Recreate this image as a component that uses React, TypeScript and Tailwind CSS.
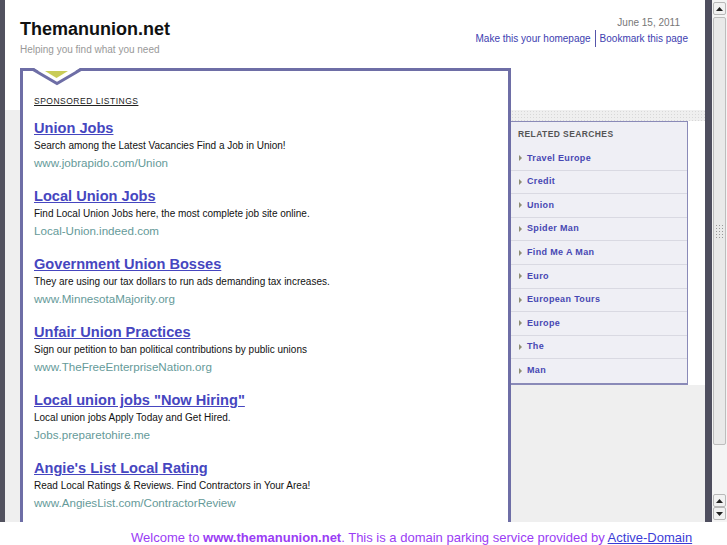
const listings = [
  { title: "Union Jobs", desc: "Search among the Latest Vacancies Find a Job in Union!", url: "www.jobrapido.com/Union" },
  { title: "Local Union Jobs", desc: "Find Local Union Jobs here, the most complete job site online.", url: "Local-Union.indeed.com" },
  { title: "Government Union Bosses", desc: "They are using our tax dollars to run ads demanding tax increases.", url: "www.MinnesotaMajority.org" },
  { title: "Unfair Union Practices", desc: "Sign our petition to ban political contributions by public unions", url: "www.TheFreeEnterpriseNation.org" },
  { title: 'Local union jobs "Now Hiring"', desc: "Local union jobs Apply Today and Get Hired.", url: "Jobs.preparetohire.me" },
  { title: "Angie's List Local Rating", desc: "Read Local Ratings & Reviews. Find Contractors in Your Area!", url: "www.AngiesList.com/ContractorReview" },
];

const related = ["Travel Europe", "Credit", "Union", "Spider Man", "Find Me A Man", "Euro", "European Tours", "Europe", "The", "Man"];

function Arrow({ up }: { up: boolean }) {
  return (
    <div className="h-[13px] shrink-0 mx-[1px] border border-[#b8b8b8] rounded-[2px] bg-[#f2f2f2] flex items-center justify-center">
      <svg width="7" height="4" viewBox="0 0 7 4">
        <polygon points={up ? "0,4 7,4 3.5,0" : "0,0 7,0 3.5,4"} fill="#222" />
      </svg>
    </div>
  );
}

function Scrollbar() {
  return (
    <div className="w-[15px] h-full bg-[#f4f4f4] flex flex-col pt-[2px] pb-[2px]">
      <Arrow up />
      <div className="mt-[2px] h-[428px] shrink-0 mx-[1px] border border-[#bdbdbd] rounded-[2px] bg-[#e9e9e9] flex items-center justify-center">
        <div className="grid grid-cols-3 gap-[2px]">
          {Array.from({ length: 15 }).map((_, i) => (
            <div key={i} className="w-[1px] h-[1px] bg-[#999]" />
          ))}
        </div>
      </div>
      <div className="flex-1" />
      <Arrow up />
      <Arrow up={false} />
    </div>
  );
}

export default function App() {
  return (
    <div className="w-[727px] h-[545px] overflow-hidden bg-white font-['Liberation_Sans',Arial,sans-serif]">
      <div className="flex h-[522px]">
        <div className="w-[5px] bg-[#52525f]" />
        <div className="w-[700px] flex flex-col overflow-hidden bg-[linear-gradient(to_bottom,white_110px,#efefef_110px)]">
          {/* header */}
          <div className="h-[68px] shrink-0 flex justify-between pl-[15px] pr-[17px]">
            <div>
              <div className="mt-[17px] text-[18px] leading-[24px] font-bold text-[#111]">Themanunion.net</div>
              <div className="mt-[2px] text-[10px] leading-[14px] text-[#999]">Helping you find what you need</div>
            </div>
            <div className="flex flex-col items-end">
              <div className="mt-[16px] mr-[8px] text-[10px] leading-[14px] text-[#777]">June 15, 2011</div>
              <div className="flex items-center text-[10px] leading-[14px] text-[#4040b0]">
                <span>Make this your homepage</span>
                <span className="mx-[4px] w-[1px] h-[17px] bg-[#5555aa]" />
                <span>Bookmark this page</span>
              </div>
            </div>
          </div>

          {/* body */}
          <div className="flex flex-1 min-h-0 pl-[15px]">
            <div className="relative w-[491px] border-[3px] border-b-0 border-[#6e6ea6] bg-white pl-[11px]">
              <svg className="absolute -top-[3px] -left-[3px]" width="70" height="20" viewBox="0 0 70 20">
                <polygon points="14,0 60,0 37,15" fill="white" />
                <polyline points="13,1.5 37,15.5 61,1.5" fill="none" stroke="#6e6ea6" strokeWidth="3" />
                <polygon points="25,3 48,3 36.5,10" fill="#c9cc58" />
              </svg>
              <div className="mt-[24px] text-[8.5px] leading-[12px] tracking-[0.5px] text-[#222] underline">SPONSORED LISTINGS</div>
              <div className="mt-[12px]">
                {listings.map((l) => (
                  <div key={l.title} className="mb-[16px]">
                    <div className="h-[18px] text-[14.6px] leading-[18px] font-bold text-[#4646c0] underline">{l.title}</div>
                    <div className="h-[18px] text-[10px] leading-[18px] text-[#111]">{l.desc}</div>
                    <div className="h-[16px] text-[11.6px] leading-[16px] text-[#659a99]">{l.url}</div>
                  </div>
                ))}
              </div>
            </div>
            <div className="flex-1 pt-[42px]">
              <div className="h-[11px] bg-[radial-gradient(#d8d8d8_1px,transparent_1px)] bg-[length:3px_3px]" />
              <div className="flex">
                <div className="w-[177px] border border-l-0 border-b-2 border-[#8a8ab8] bg-[#efeff5]">
                  <div className="h-[25px] pl-[7px] flex items-center text-[8.5px] font-bold tracking-[0.4px] text-[#555]">RELATED SEARCHES</div>
                  <div className="divide-y divide-[#d9d9e2]">
                    {related.map((r) => (
                      <div key={r} className="h-[23.6px] flex items-center pl-[8px]">
                        <svg width="3" height="6" viewBox="0 0 3 6" className="mr-[5px]">
                          <polygon points="0,0 3,3 0,6" fill="#8d8d74" />
                        </svg>
                        <span className="text-[9px] font-bold tracking-[0.35px] text-[#4747b3]">{r}</span>
                      </div>
                    ))}
                  </div>
                </div>
                <div className="w-[17px] bg-white" />
              </div>
            </div>
          </div>
        </div>
        <div className="w-[7px] bg-[#4e4e5e]" />
        <Scrollbar />
      </div>
      <div className="pl-[131px] pt-[8px] text-[13px] leading-[16px] text-[#9a3cf5] whitespace-nowrap">
        Welcome to <span className="font-bold">www.themanunion.net</span>. This is a domain parking service provided by{" "}
        <span className="text-[#3b3bd6] underline">Active-Domain</span>
      </div>
    </div>
  );
}
